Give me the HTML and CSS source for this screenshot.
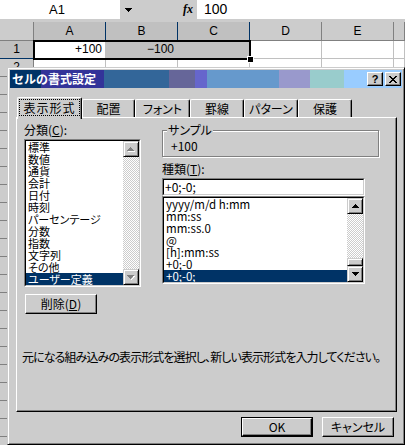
FILE: index.html
```html
<!DOCTYPE html>
<html lang="ja">
<head>
<meta charset="utf-8">
<title>セルの書式設定</title>
<link rel="stylesheet" href="styles.css">
</head>
<body>
<div class="fbar">
  <div class="namebox">A1</div>
  <div class="dropbtn"><svg width="7" height="4" viewBox="0 0 7 4" shape-rendering="crispEdges"><path d="M0 0h7v1H0zM1 1h5v1H1zM2 2h3v1H2zM3 3h1v1H3z"/></svg></div>
  <div class="fx">fx</div>
  <div class="formula">100</div>
</div>

<div class="sheet">
  <div class="rh corner"></div><div class="ch sel">A</div><div class="ch sel">B</div><div class="ch sel">C</div><div class="ch">D</div><div class="ch">E</div><div class="ch"></div>
  <div class="rh rsel">1</div><div class="c num">+100</div><div class="c num hl hlmid">−100</div><div class="c hl"></div><div class="c"></div><div class="c"></div><div class="c"></div>
  <div class="rh">2</div><div class="c"></div><div class="c"></div><div class="c"></div><div class="c"></div><div class="c"></div><div class="c"></div>
  <div class="rh">3</div><div class="c"></div><div class="c"></div><div class="c"></div><div class="c"></div><div class="c"></div><div class="c"></div>
  <div class="rh">4</div><div class="c"></div><div class="c"></div><div class="c"></div><div class="c"></div><div class="c"></div><div class="c"></div>
  <div class="rh">5</div><div class="c"></div><div class="c"></div><div class="c"></div><div class="c"></div><div class="c"></div><div class="c"></div>
  <div class="rh">6</div><div class="c"></div><div class="c"></div><div class="c"></div><div class="c"></div><div class="c"></div><div class="c"></div>
  <div class="rh">7</div><div class="c"></div><div class="c"></div><div class="c"></div><div class="c"></div><div class="c"></div><div class="c"></div>
  <div class="rh">8</div><div class="c"></div><div class="c"></div><div class="c"></div><div class="c"></div><div class="c"></div><div class="c"></div>
  <div class="rh">9</div><div class="c"></div><div class="c"></div><div class="c"></div><div class="c"></div><div class="c"></div><div class="c"></div>
  <div class="rh">10</div><div class="c"></div><div class="c"></div><div class="c"></div><div class="c"></div><div class="c"></div><div class="c"></div>
  <div class="rh">11</div><div class="c"></div><div class="c"></div><div class="c"></div><div class="c"></div><div class="c"></div><div class="c"></div>
  <div class="rh">12</div><div class="c"></div><div class="c"></div><div class="c"></div><div class="c"></div><div class="c"></div><div class="c"></div>
  <div class="rh">13</div><div class="c"></div><div class="c"></div><div class="c"></div><div class="c"></div><div class="c"></div><div class="c"></div>
  <div class="rh">14</div><div class="c"></div><div class="c"></div><div class="c"></div><div class="c"></div><div class="c"></div><div class="c"></div>
  <div class="rh">15</div><div class="c"></div><div class="c"></div><div class="c"></div><div class="c"></div><div class="c"></div><div class="c"></div>
  <div class="rh">16</div><div class="c"></div><div class="c"></div><div class="c"></div><div class="c"></div><div class="c"></div><div class="c"></div>
  <div class="rh">17</div><div class="c"></div><div class="c"></div><div class="c"></div><div class="c"></div><div class="c"></div><div class="c"></div>
  <div class="rh">18</div><div class="c"></div><div class="c"></div><div class="c"></div><div class="c"></div><div class="c"></div><div class="c"></div>
  <div class="rh">19</div><div class="c"></div><div class="c"></div><div class="c"></div><div class="c"></div><div class="c"></div><div class="c"></div>
  <div class="rh">20</div><div class="c"></div><div class="c"></div><div class="c"></div><div class="c"></div><div class="c"></div><div class="c"></div>
  <div class="rh">21</div><div class="c"></div><div class="c"></div><div class="c"></div><div class="c"></div><div class="c"></div><div class="c"></div>
  <div class="rh">22</div><div class="c"></div><div class="c"></div><div class="c"></div><div class="c"></div><div class="c"></div><div class="c"></div>
  <div class="rh"></div><div class="c"></div><div class="c"></div><div class="c"></div><div class="c"></div><div class="c"></div><div class="c"></div>
  <div class="selection"><span class="handle"></span></div>
</div>

<div class="dialog">
  <div class="titlebar">
    <span class="title">セルの書式設定</span>
    <span class="tbtn help">?</span>
    <span class="tbtn close"><svg width="8" height="7" viewBox="0 0 8 7" shape-rendering="crispEdges"><path d="M0 0h2v1H0zM6 0h2v1H6zM1 1h2v1H1zM5 1h2v1H5zM2 2h4v1H2zM3 3h2v1H3zM2 4h4v1H2zM1 5h2v1H1zM5 5h2v1H5zM0 6h2v1H0zM6 6h2v1H6z"/></svg></span>
  </div>

  <div class="tabs">
    <div class="tab active"><span class="focus">表示形式</span></div>
    <div class="tab t53">配置</div>
    <div class="tab t55">フォント</div>
    <div class="tab t54">罫線</div>
    <div class="tab t54">パターン</div>
    <div class="tab t54">保護</div>
  </div>

  <div class="panel">
    <div class="cols">
      <div class="col-left">
        <div class="label">分類(<u>C</u>):</div>
        <div class="listbox cat">
          <div class="listbox-in">
            <div class="items">
              <div class="item">標準</div>
              <div class="item">数値</div>
              <div class="item">通貨</div>
              <div class="item">会計</div>
              <div class="item">日付</div>
              <div class="item">時刻</div>
              <div class="item">パーセンテージ</div>
              <div class="item">分数</div>
              <div class="item">指数</div>
              <div class="item">文字列</div>
              <div class="item">その他</div>
              <div class="item sel">ユーザー定義</div>
            </div>
            <div class="vscroll">
              <div class="sbtn disabled"><svg width="8" height="5" viewBox="0 0 8 5" shape-rendering="crispEdges"><path class="shadow" d="M4 1h1v1H4zM5 2h1v1H5zM6 3h1v1H6zM1 4h7v1H1z"/><path d="M3 0h1v1H3zM2 1h3v1H2zM1 2h5v1H1zM0 3h7v1H0z"/></svg></div>
              <div class="track"></div>
              <div class="sbtn disabled"><svg width="8" height="5" viewBox="0 0 8 5" shape-rendering="crispEdges"><path class="shadow" d="M1 1h7v1H1zM6 2h1v1H6zM5 3h1v1H5zM4 4h1v1H4z"/><path d="M0 0h7v1H0zM1 1h5v1H1zM2 2h3v1H2zM3 3h1v1H3z"/></svg></div>
            </div>
          </div>
        </div>
        <div class="btn del">削除(<u>D</u>)</div>
      </div>

      <div class="col-right">
        <fieldset class="sample">
          <legend>サンプル</legend>
          <div class="sample-val">+100</div>
        </fieldset>
        <div class="label type-label">種類(<u>T</u>):</div>
        <div class="textbox"><div class="textbox-in">+0;-0;</div></div>
        <div class="listbox types">
          <div class="listbox-in">
            <div class="items">
              <div class="item">yyyy/m/d h:mm</div>
              <div class="item">mm:ss</div>
              <div class="item">mm:ss.0</div>
              <div class="item">@</div>
              <div class="item">[h]:mm:ss</div>
              <div class="item">+0;-0</div>
              <div class="item sel">+0;-0;</div>
            </div>
            <div class="vscroll">
              <div class="sbtn"><svg width="7" height="4" viewBox="0 0 7 4" shape-rendering="crispEdges"><path d="M3 0h1v1H3zM2 1h3v1H2zM1 2h5v1H1zM0 3h7v1H0z"/></svg></div>
              <div class="track"></div>
              <div class="thumb"></div>
              <div class="sbtn"><svg width="7" height="4" viewBox="0 0 7 4" shape-rendering="crispEdges"><path d="M0 0h7v1H0zM1 1h5v1H1zM2 2h3v1H2zM3 3h1v1H3z"/></svg></div>
            </div>
          </div>
        </div>
      </div>
    </div>
    <p class="desc">元になる組み込みの表示形式を選択し、新しい表示形式を入力してください。</p>
  </div>

  <div class="buttons">
    <div class="btn default"><div class="btn-in">OK</div></div>
    <div class="btn">キャンセル</div>
  </div>
</div>
</body>
</html>
```

FILE: styles.css
```css
* { box-sizing: border-box; margin: 0; padding: 0; }
html, body { width: 405px; height: 445px; overflow: hidden; }
body {
  position: relative;
  background: #fff;
  color: #000;
  font-family: "Noto Sans CJK JP", sans-serif;
  font-size: 12px;
  line-height: 12px;
}

/* formula bar */
.fbar { display: flex; height: 22px; padding-bottom: 3px; background: #ccc; }
.namebox {
  width: 120px; background: #fff; text-align: center; padding-right: 6px;
  font: 13px/19px "Liberation Sans", sans-serif;
}
.dropbtn { width: 17px; display: flex; align-items: center; justify-content: center; }
.fx {
  margin-left: 46px; width: 14px;
  font: italic bold 12px/19px "Liberation Serif", serif;
}
.formula {
  flex: 1; background: #fff; padding-left: 7px;
  font: 14px/19px "Liberation Sans", sans-serif;
}

/* sheet */
.sheet {
  position: relative;
  display: grid;
  grid-template-columns: 34px repeat(5, 72px) 1fr;
  grid-template-rows: 19px;
  grid-auto-rows: 18px;
  font: 12px/17px "Liberation Sans", sans-serif;
}
.c { border-right: 1px solid #c0c0c0; border-bottom: 1px solid #c0c0c0; background: #fff; }
.ch, .rh {
  background: #ccc; text-align: center;
  border-right: 1px solid #808080; border-bottom: 1px solid #808080;
}
.ch { line-height: 18px; }
.ch.sel { background: #c0c0c0; border-right-color: #003366; border-bottom-color: #003366; }
.rh.rsel { background: #c0c0c0; border-right-color: #003366; border-bottom-color: #003366; }
.num { text-align: right; padding-right: 3px; }
.hl { background: #c0c0c0; }
.hlmid { border-right-color: #c0c0c0; }
.selection {
  position: absolute; left: 33px; top: 18px; width: 218px; height: 20px;
  border: 2px solid #000;
}
.handle {
  position: absolute; right: -5px; bottom: -5px; width: 7px; height: 7px;
  background: #000; border: 1px solid #fff;
}

/* dialog */
.dialog {
  position: absolute; left: 7px; top: 67px; width: 398px; height: 378px;
  background: #ccc;
  border: 1px solid; border-color: #ccc #000 #000 #ccc;
  box-shadow: inset 1px 1px #fff, inset -1px -1px #808080;
  padding: 2px;
  display: flex; flex-direction: column;
}
.titlebar {
  height: 18px; flex: none;
  display: flex; align-items: center;
  padding: 0 1px 0 2px;
  background: linear-gradient(to right,
    #003366 0 31px, #333399 31px 94px, #336699 94px 159px,
    #666699 159px 185px, #6666cc 185px 197px, #6699cc 197px 269px,
    #9999cc 269px 300px, #99cccc 300px 334px, #99ccff 334px);
}
.title { flex: 1; color: #fff; font-weight: bold; line-height: 14px; }
.tbtn {
  width: 16px; height: 14px; background: #ccc;
  border: 1px solid; border-color: #fff #000 #000 #fff;
  box-shadow: inset -1px -1px #808080;
  display: flex; align-items: center; justify-content: center;
}
.help { margin-right: 2px; font: bold 11px/12px "Liberation Sans", sans-serif; }

/* tabs */
.tabs {
  flex: none; height: 20px; margin: 9px 5px 0 6px; padding-left: 1px;
  display: flex; align-items: flex-end;
  position: relative; z-index: 1;
}
.tab {
  height: 18px; background: #ccc;
  border: 1px solid; border-bottom: none; border-color: #fff #000 #000 #fff;
  border-radius: 2px 2px 0 0;
  box-shadow: inset -1px 0 #808080;
  display: flex; align-items: center; justify-content: center;
  font-feature-settings: "palt";
}
.tab.active { width: 65px; height: 22px; margin-bottom: -2px; padding-bottom: 2px; }
.t53 { width: 53px; }
.t54 { width: 54px; }
.t55 { width: 55px; }
.focus { outline: 1px dotted #000; padding: 2px 3px 1px; letter-spacing: 1px; }

/* panel */
.panel {
  flex: none; height: 295px; margin: 0 5px 0 6px;
  border: 1px solid; border-color: #fff #000 #000 #fff;
  box-shadow: inset -1px -1px #808080;
  padding: 6px 7px 0;
}
.cols { display: flex; gap: 21px; align-items: flex-start; }
.col-left { width: 117px; display: flex; flex-direction: column; }
.col-right { width: 217px; display: flex; flex-direction: column; }
.label { height: 12px; line-height: 12px; margin-bottom: 3px; white-space: nowrap; }

.listbox { border: 1px solid; border-color: #808080 #fff #fff #808080; }
.listbox-in {
  height: 100%;
  border: 1px solid; border-color: #000 #ccc #ccc #000;
  background: #fff; display: flex;
}
.cat { width: 117px; height: 148px; }
.types { width: 203px; height: 88px; }
.items { flex: 1; overflow: hidden; font-feature-settings: "palt"; font-size: 11px; }
.item { height: 12px; line-height: 12px; padding-left: 2px; white-space: nowrap; }
.types .item { font-size: 11.5px; }
.item.sel { background: #003366; color: #fff; }
.vscroll { width: 16px; display: flex; flex-direction: column; }
.sbtn, .thumb {
  flex: none; height: 16px; background: #ccc;
  border: 1px solid; border-color: #ccc #000 #000 #ccc;
  box-shadow: inset 1px 1px #fff, inset -1px -1px #808080;
  display: flex; align-items: center; justify-content: center;
}
.thumb { height: 8px; }
.sbtn.disabled path { fill: #808080; }
.sbtn.disabled path.shadow { fill: #fff; }
.track { flex: 1; background: repeating-conic-gradient(#fff 0 25%, #ccc 0 50%) 0 0 / 2px 2px; }

.btn {
  width: 72px; height: 20px; background: #ccc;
  border: 1px solid; border-color: #fff #000 #000 #fff;
  box-shadow: inset -1px -1px #808080;
  display: flex; align-items: center; justify-content: center;
  font-feature-settings: "palt";
}
.del { margin: 7px 0 0 1px; }
.btn.default { border: 1px solid #000; box-shadow: none; padding: 0; }
.btn-in {
  width: 100%; height: 100%;
  border: 1px solid; border-color: #fff #000 #000 #fff;
  box-shadow: inset -1px -1px #808080;
  display: flex; align-items: center; justify-content: center;
}

.sample {
  width: 217px; padding: 0 4px 4px;
  border: 1px solid #808080;
  box-shadow: inset 1px 1px #fff, 1px 1px #fff;
}
.sample legend {
  padding: 0 1px; line-height: 12px; background: #ccc;
  font-feature-settings: "palt";
}
.sample-val { padding: 4px 0 0 4px; line-height: 12px; }
.type-label { margin-top: 6px; }
.textbox {
  width: 203px; height: 18px;
  border: 1px solid; border-color: #808080 #fff #fff #808080;
}
.textbox-in {
  height: 100%; background: #fff; padding-left: 1px; line-height: 14px;
  border: 1px solid; border-color: #000 #ccc #ccc #000;
}
.desc {
  margin: 37px 0 0 -2px; line-height: 12px; white-space: nowrap;
  font-size: 12px; letter-spacing: -0.9px;
  font-feature-settings: "palt";
}

.buttons {
  flex: none; display: flex; justify-content: flex-end; gap: 9px;
  margin: 5px 8px 0 0;
}
```
